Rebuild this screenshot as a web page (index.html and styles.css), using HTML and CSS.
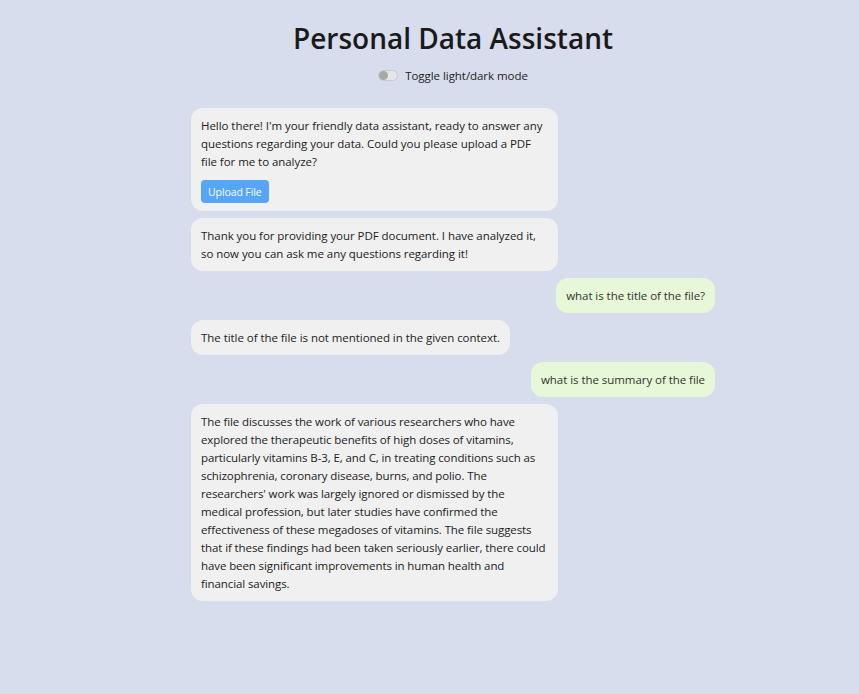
FILE: index.html
```html
<!DOCTYPE html>
<html lang="en">
<head>
<meta charset="utf-8">
<title>Personal Data Assistant</title>
<link rel="stylesheet" href="styles.css">
</head>
<body>
<div class="app">
  <header class="header">
    <h1 class="title">Personal Data Assistant</h1>
    <label class="toggle-row">
      <span class="switch"><span class="knob"></span></span>
      <span class="toggle-label">Toggle light/dark mode</span>
    </label>
  </header>
  <main class="chat">
    <div class="msg bot">
      <p class="text">Hello there! I'm your friendly data assistant, ready to answer any questions regarding your data. Could you please upload a PDF file for me to analyze?</p>
      <button class="upload">Upload File</button>
    </div>
    <div class="msg bot">
      <p class="text">Thank you for providing your PDF document. I have analyzed it, so now you can ask me any questions regarding it!</p>
    </div>
    <div class="msg user">
      <p class="text">what is the title of the file?</p>
    </div>
    <div class="msg bot">
      <p class="text">The title of the file is not mentioned in the given context.</p>
    </div>
    <div class="msg user">
      <p class="text">what is the summary of the file</p>
    </div>
    <div class="msg bot">
      <p class="text tight">The file discusses the work of various researchers who have explored the therapeutic benefits of high doses of vitamins, particularly vitamins B-3, E, and C, in treating conditions such as schizophrenia, coronary disease, burns, and polio. The researchers' work was largely ignored or dismissed by the medical profession, but later studies have confirmed the effectiveness of these megadoses of vitamins. The file suggests that if these findings had been taken seriously earlier, there could have been significant improvements in human health and financial savings.</p>
    </div>
  </main>
</div>
</body>
</html>
```
FILE: styles.css
```css
* { box-sizing: border-box; }
html, body {
  margin: 0;
  padding: 0;
  background: #d7ddec;
  height: 100%;
}
body {
  font-family: "Open Sans", "Noto Sans", sans-serif;
  font-size: 11.5px;
  letter-spacing: -0.05px;
  color: #222;
}
.app {
  width: 524px;
  margin-left: 191px;
  padding-top: 18px;
}
.header {
  display: flex;
  flex-direction: column;
  align-items: center;
}
.title {
  margin: 0;
  font-size: 28px;
  font-weight: 600;
  letter-spacing: 0;
  line-height: 40px;
  color: #1a1a1a;
}
.toggle-row {
  display: flex;
  align-items: center;
  gap: 7px;
  margin-top: 8px;
  height: 18px;
  color: #222;
}
.switch {
  width: 20px;
  height: 11px;
  border-radius: 6px;
  background: #e6e6e6;
  border: 1px solid #c8c8c8;
  position: relative;
}
.knob {
  position: absolute;
  left: 0;
  top: 0;
  width: 9px;
  height: 9px;
  border-radius: 50%;
  background: #a9a9a9;
}
.chat {
  margin-top: 24px;
  display: flex;
  flex-direction: column;
  gap: 7px;
}
.msg {
  max-width: 70%;
  padding: 9px 10px 8px;
  border-radius: 12px;
  line-height: 18px;
}
.msg .text { margin: 0; }
.msg .text.tight { letter-spacing: -0.1px; }
.bot {
  align-self: flex-start;
  background: #f0f0f0;
  color: #222;
}
.user {
  align-self: flex-end;
  background: #e6f8d8;
  color: #333;
}
.upload {
  margin-top: 9px;
  display: block;
  height: 23px;
  padding: 0 7px;
  border: none;
  border-radius: 4px;
  background: #56a6f5;
  color: #fff;
  font-family: inherit;
  font-size: 10.5px;
  letter-spacing: -0.1px;
}
```
